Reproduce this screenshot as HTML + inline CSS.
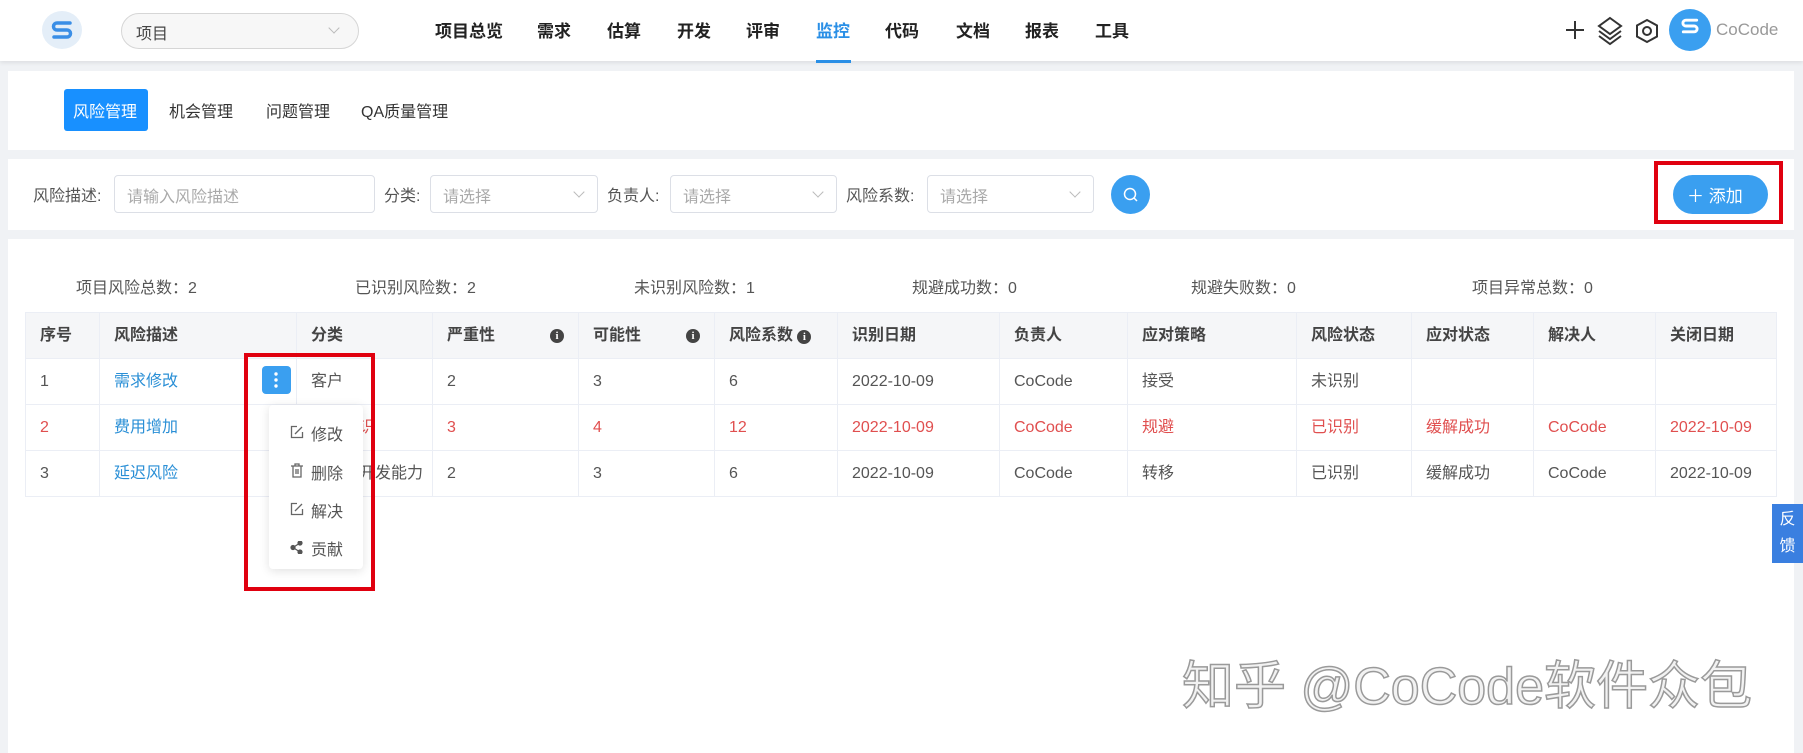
<!DOCTYPE html>
<html><head><meta charset="utf-8"><style>
*{box-sizing:border-box;margin:0;padding:0}
body{width:1803px;height:753px;background:#f0f2f5;font-family:"Liberation Sans","Noto Sans CJK SC",sans-serif;color:#555;position:relative;overflow:hidden;font-size:16px}
.a{position:absolute;white-space:nowrap}
.nav{left:0;top:0;width:1803px;height:61px;background:#fff;box-shadow:0 2px 4px rgba(0,0,0,.08)}
.ni{top:17px;font-size:17px;font-weight:bold;color:#222}
.panel{background:#fff;left:8px;width:1786px}
.inp{border:1px solid #dcdfe6;border-radius:4px;background:#fff;height:38px;top:175px;color:#aaa;padding:7px 12px;font-size:16px}
.chev{position:absolute;right:14px;top:12px;width:8px;height:8px;border-right:1px solid #bbb;border-bottom:1px solid #bbb;transform:rotate(45deg)}
.lbl{top:182px;font-size:16px;color:#555}
table{position:absolute;left:25px;top:312px;border-collapse:collapse;table-layout:fixed;width:1751px}
td,th{border:1px solid #ebeef5;height:46px;padding:0 14px;text-align:left;font-size:16px;white-space:nowrap;overflow:hidden;line-height:20px}
th{background:#f5f6f8;color:#444;font-weight:bold}
.r td{color:#e04f4f}
.lk{color:#2a8fd6!important}
.info{display:inline-block;width:14px;height:14px;border-radius:50%;background:#444;color:#fff;font-size:11px;text-align:center;line-height:14px;font-weight:bold;float:right;margin-top:3px;font-family:"Liberation Serif",serif}
.red{border:4px solid #e0000f}
.mi{left:311px;color:#555}
</style></head><body>
<div class="a nav"></div>
<div class="a" style="left:42px;top:11px;width:40px;height:38px;border-radius:50%;background:#e4eef8"></div>
<svg class="a" style="left:50px;top:20px" width="24" height="20" viewBox="0 0 24 20" fill="none" stroke="#3a8ee6" stroke-width="3.5" stroke-linecap="round"><path d="M20 3 H7 a3.5 3.5 0 0 0 0 7 H17 a3.5 3.5 0 0 1 0 7 H4"/></svg>
<div class="a" style="left:121px;top:13px;width:238px;height:36px;border:1px solid #d6d6d6;border-radius:18px;background:#f7f7f7;padding:6px 14px;font-size:16px;color:#444">项目<span class="chev" style="right:20px;top:10px"></span></div>
<div class="a ni" style="left:435px">项目总览</div>
<div class="a ni" style="left:537px">需求</div>
<div class="a ni" style="left:607px">估算</div>
<div class="a ni" style="left:677px">开发</div>
<div class="a ni" style="left:746px">评审</div>
<div class="a ni" style="left:816px;color:#2a8fe6">监控</div>
<div class="a" style="left:816px;top:60px;width:35px;height:3px;background:#2a8fe6"></div>
<div class="a ni" style="left:885px">代码</div>
<div class="a ni" style="left:956px">文档</div>
<div class="a ni" style="left:1025px">报表</div>
<div class="a ni" style="left:1095px">工具</div>
<svg class="a" style="left:1565px;top:20px" width="20" height="20" viewBox="0 0 20 20" stroke="#333" stroke-width="2"><path d="M10 1V19M1 10H19"/></svg>
<svg class="a" style="left:1597px;top:16px" width="26" height="30" viewBox="0 0 26 30" fill="none" stroke="#333" stroke-width="2"><path d="M13 2 L24 10 L13 18 L2 10Z"/><path d="M2 15 L13 23 L24 15"/><path d="M2 20 L13 28 L24 20"/></svg>
<svg class="a" style="left:1635px;top:18px" width="24" height="26" viewBox="0 0 24 26" fill="none" stroke="#333" stroke-width="2"><path d="M12 2 L22 7.5 V18.5 L12 24 L2 18.5 V7.5Z"/><circle cx="12" cy="13" r="4"/></svg>
<div class="a" style="left:1669px;top:9px;width:42px;height:42px;border-radius:50%;background:#3a9ff0"></div>
<svg class="a" style="left:1680px;top:17px" width="20" height="18" viewBox="0 0 24 20" fill="none" stroke="#fff" stroke-width="3.5" stroke-linecap="round"><path d="M20 3 H7 a3.5 3.5 0 0 0 0 7 H17 a3.5 3.5 0 0 1 0 7 H4"/></svg>
<div class="a" style="left:1716px;top:20px;font-size:17px;color:#999">CoCode</div>

<div class="a panel" style="top:71px;height:79px"></div>
<div class="a" style="left:64px;top:89px;width:84px;height:42px;background:#1890ff;border-radius:3px;color:#fff;font-size:16px;padding:9px 9px">风险管理</div>
<div class="a" style="left:169px;top:98px;color:#333">机会管理</div>
<div class="a" style="left:266px;top:98px;color:#333">问题管理</div>
<div class="a" style="left:361px;top:98px;color:#333">QA质量管理</div>

<div class="a panel" style="top:159px;height:71px"></div>
<div class="a lbl" style="left:33px">风险描述:</div>
<div class="a inp" style="left:114px;width:261px">请输入风险描述</div>
<div class="a lbl" style="left:384px">分类:</div>
<div class="a inp" style="left:430px;width:168px">请选择<span class="chev"></span></div>
<div class="a lbl" style="left:607px">负责人:</div>
<div class="a inp" style="left:670px;width:167px">请选择<span class="chev"></span></div>
<div class="a lbl" style="left:846px">风险系数:</div>
<div class="a inp" style="left:927px;width:167px">请选择<span class="chev"></span></div>
<div class="a" style="left:1111px;top:175px;width:39px;height:39px;border-radius:50%;background:#3a9ff0"></div>
<svg class="a" style="left:1122px;top:186px" width="17" height="17" viewBox="0 0 17 17" fill="none" stroke="#fff" stroke-width="1.5"><circle cx="8" cy="8" r="5.5"/><path d="M12 12 L15 15"/></svg>
<div class="a red" style="left:1654px;top:161px;width:129px;height:63px"></div>
<div class="a" style="left:1673px;top:175px;width:95px;height:39px;border-radius:20px;background:#3a9ff0;color:#fff;font-size:17px;padding:7px 14px">＋ 添加</div>

<div class="a panel" style="top:239px;height:514px"></div>
<div class="a" style="left:76px;top:274px">项目风险总数：2</div>
<div class="a" style="left:355px;top:274px">已识别风险数：2</div>
<div class="a" style="left:634px;top:274px">未识别风险数：1</div>
<div class="a" style="left:912px;top:274px">规避成功数：0</div>
<div class="a" style="left:1191px;top:274px">规避失败数：0</div>
<div class="a" style="left:1472px;top:274px">项目异常总数：0</div>

<table>
<colgroup><col style="width:74px"><col style="width:197px"><col style="width:136px"><col style="width:146px"><col style="width:136px"><col style="width:123px"><col style="width:162px"><col style="width:128px"><col style="width:169px"><col style="width:115px"><col style="width:122px"><col style="width:122px"><col style="width:121px"></colgroup>
<tr><th>序号</th><th>风险描述</th><th>分类</th><th>严重性<span class="info">i</span></th><th>可能性<span class="info">i</span></th><th>风险系数 <span class="info" style="float:none">i</span></th><th>识别日期</th><th>负责人</th><th>应对策略</th><th>风险状态</th><th>应对状态</th><th>解决人</th><th>关闭日期</th></tr>
<tr><td>1</td><td class="lk">需求修改</td><td>客户</td><td>2</td><td>3</td><td>6</td><td>2022-10-09</td><td>CoCode</td><td>接受</td><td>未识别</td><td></td><td></td><td></td></tr>
<tr class="r"><td>2</td><td class="lk">费用增加</td><td>内部认识</td><td>3</td><td>4</td><td>12</td><td>2022-10-09</td><td>CoCode</td><td>规避</td><td>已识别</td><td>缓解成功</td><td>CoCode</td><td>2022-10-09</td></tr>
<tr><td>3</td><td class="lk">延迟风险</td><td style="padding-left:14px">技术团开发能力</td><td>2</td><td>3</td><td>6</td><td>2022-10-09</td><td>CoCode</td><td>转移</td><td>已识别</td><td>缓解成功</td><td>CoCode</td><td>2022-10-09</td></tr>
</table>

<div class="a" style="left:262px;top:366px;width:29px;height:28px;border-radius:4px;background:#3a9ff0"></div>
<svg class="a" style="left:274px;top:372px" width="4" height="16" viewBox="0 0 4 16" fill="#fff"><circle cx="2" cy="2" r="1.7"/><circle cx="2" cy="8" r="1.7"/><circle cx="2" cy="14" r="1.7"/></svg>
<div class="a" style="left:269px;top:405px;width:94px;height:164px;background:#fff;border-radius:4px;box-shadow:0 2px 10px rgba(0,0,0,.12)"></div>
<svg class="a" style="left:290px;top:425px" width="14" height="14" viewBox="0 0 14 14" fill="none" stroke="#666" stroke-width="1.3"><path d="M7 1.5H1.5V12.5H12.5V7"/><path d="M5 9L12 2"/></svg>
<div class="a mi" style="top:421px">修改</div>
<svg class="a" style="left:290px;top:463px" width="14" height="15" viewBox="0 0 14 15" fill="none" stroke="#666" stroke-width="1.3"><path d="M1 3H13M5 3V1H9V3M3 3V14H11V3M6 6V11M8 6V11"/></svg>
<div class="a mi" style="top:460px">删除</div>
<svg class="a" style="left:290px;top:502px" width="14" height="14" viewBox="0 0 14 14" fill="none" stroke="#666" stroke-width="1.3"><path d="M7 1.5H1.5V12.5H12.5V7"/><path d="M5 9L12 2"/></svg>
<div class="a mi" style="top:498px">解决</div>
<svg class="a" style="left:290px;top:541px" width="13" height="13" viewBox="0 0 13 13" fill="#555" stroke="#555" stroke-width="1.2"><path d="M10 2L3 6.5L10 11" fill="none"/><circle cx="10" cy="2" r="2"/><circle cx="3" cy="6.5" r="2"/><circle cx="10" cy="11" r="2"/></svg>
<div class="a mi" style="top:536px">贡献</div>
<div class="a red" style="left:244px;top:353px;width:131px;height:238px"></div>

<div class="a" style="left:1772px;top:504px;width:31px;height:59px;background:#3a7fe0;color:#fff;font-size:16px;text-align:center;line-height:27px;padding-top:2px">反<br>馈</div>
<div class="a" style="left:1182px;top:644px;font-size:52px;color:#f2f2f2;-webkit-text-stroke:1.5px #9a9a9a;letter-spacing:0px">知乎 @CoCode软件众包</div>
</body></html>
